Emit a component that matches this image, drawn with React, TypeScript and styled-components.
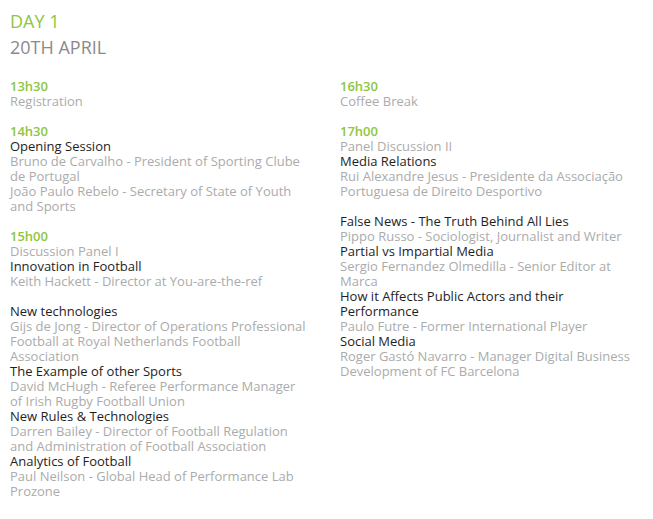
import React from "react";
import styled, { createGlobalStyle } from "styled-components";

const Global = createGlobalStyle`
  html, body { margin: 0; padding: 0; background: #fff; }
  body { font-family: "Open Sans", "Liberation Sans", sans-serif; }
`;

const Page = styled.div`
  padding: 8px 10px 0 10px;
  width: 653px;
  box-sizing: border-box;
`;

const Header = styled.header`
  display: flex;
  flex-direction: column;
  margin-bottom: 19px;
`;

const Day = styled.h1<{ $tone: "green" | "gray" }>`
  margin: 0;
  font-size: 18px;
  line-height: 26px;
  font-weight: 500;
  color: ${(p) => (p.$tone === "green" ? "#8dc63f" : "#8a8a8a")};
`;

const Columns = styled.div`
  display: grid;
  grid-template-columns: 300px 300px;
  column-gap: 30px;
  align-items: start;
`;

const Column = styled.div`
  display: flex;
  flex-direction: column;
  gap: 15px;
`;

const Block = styled.div`
  display: flex;
  flex-direction: column;
`;

const Line = styled.div<{ $kind: "time" | "title" | "info" }>`
  font-size: 13px;
  line-height: 15px;
  font-weight: ${(p) => (p.$kind === "time" ? 600 : 400)};
  color: ${(p) =>
    p.$kind === "time" ? "#8dc63f" : p.$kind === "title" ? "#1e1e1e" : "#ababab"};
`;

type Item = { k: "time" | "title" | "info"; t: string };

const left: Item[][] = [
  [
    { k: "time", t: "13h30" },
    { k: "info", t: "Registration" },
  ],
  [
    { k: "time", t: "14h30" },
    { k: "title", t: "Opening Session" },
    { k: "info", t: "Bruno de Carvalho - President of Sporting Clube de Portugal" },
    { k: "info", t: "João Paulo Rebelo - Secretary of State of Youth and Sports" },
  ],
  [
    { k: "time", t: "15h00" },
    { k: "info", t: "Discussion Panel I" },
    { k: "title", t: "Innovation in Football" },
    { k: "info", t: "Keith Hackett - Director at You-are-the-ref" },
  ],
  [
    { k: "title", t: "New technologies" },
    { k: "info", t: "Gijs de Jong - Director of Operations Professional Football at Royal Netherlands Football Association" },
    { k: "title", t: "The Example of other Sports" },
    { k: "info", t: "David McHugh - Referee Performance Manager of Irish Rugby Football Union" },
    { k: "title", t: "New Rules & Technologies" },
    { k: "info", t: "Darren Bailey - Director of Football Regulation and Administration of Football Association" },
    { k: "title", t: "Analytics of Football" },
    { k: "info", t: "Paul Neilson - Global Head of Performance Lab Prozone" },
  ],
];

const right: Item[][] = [
  [
    { k: "time", t: "16h30" },
    { k: "info", t: "Coffee Break" },
  ],
  [
    { k: "time", t: "17h00" },
    { k: "info", t: "Panel Discussion II" },
    { k: "title", t: "Media Relations" },
    { k: "info", t: "Rui Alexandre Jesus - Presidente da Associação Portuguesa de Direito Desportivo" },
  ],
  [
    { k: "title", t: "False News - The Truth Behind All Lies" },
    { k: "info", t: "Pippo Russo - Sociologist, Journalist and Writer" },
    { k: "title", t: "Partial vs Impartial Media" },
    { k: "info", t: "Sergio Fernandez Olmedilla - Senior Editor at Marca" },
    { k: "title", t: "How it Affects Public Actors and their Performance" },
    { k: "info", t: "Paulo Futre - Former International Player" },
    { k: "title", t: "Social Media" },
    { k: "info", t: "Roger Gastó Navarro - Manager Digital Business Development of FC Barcelona" },
  ],
];

const renderCol = (blocks: Item[][]) => (
  <Column>
    {blocks.map((b, i) => (
      <Block key={i}>
        {b.map((it, j) => (
          <Line key={j} $kind={it.k}>
            {it.t}
          </Line>
        ))}
      </Block>
    ))}
  </Column>
);

export default function App() {
  return (
    <>
      <Global />
      <Page>
        <Header>
          <Day $tone="green">DAY 1</Day>
          <Day $tone="gray">20TH APRIL</Day>
        </Header>
        <Columns>
          {renderCol(left)}
          {renderCol(right)}
        </Columns>
      </Page>
    </>
  );
}
